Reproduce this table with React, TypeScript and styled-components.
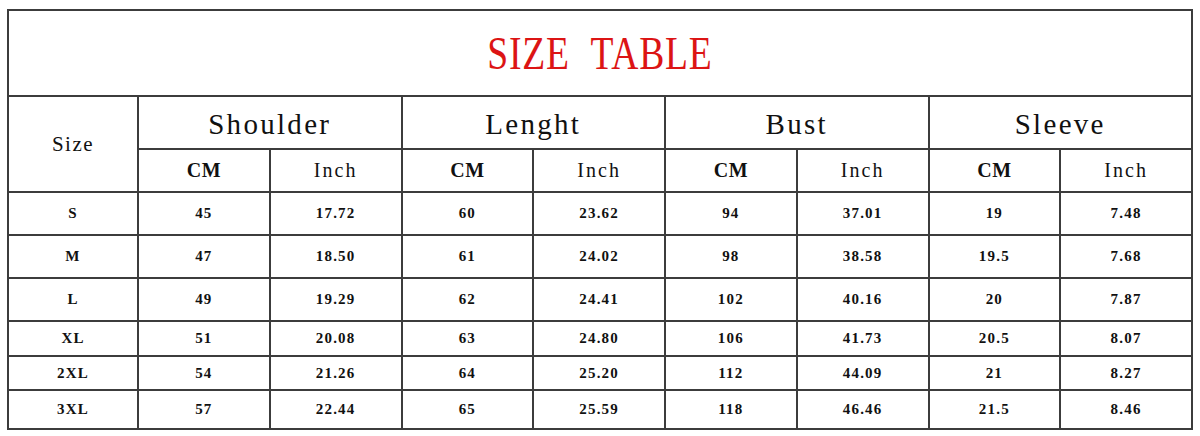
import React from 'react';
import styled, { createGlobalStyle } from 'styled-components';

const GlobalStyle = createGlobalStyle`
  html, body {
    margin: 0;
    padding: 0;
    background: #ffffff;
  }
  body {
    font-family: "Liberation Serif", "Times New Roman", serif;
    color: #111111;
  }
`;

const Page = styled.div`
  width: 1200px;
  height: 436px;
  padding: 9px 0 0 7px;
  box-sizing: border-box;
`;

const Table = styled.table`
  width: 1186px;
  border-collapse: collapse;
  table-layout: fixed;
  font-family: "Liberation Serif", "Times New Roman", serif;
`;

const Row = styled.tr<{ $h: number }>`
  height: ${({ $h }) => $h}px;
`;

const BaseCell = styled.td`
  border: 2px solid #3c3c3c;
  padding: 0;
  text-align: center;
  vertical-align: middle;
  white-space: nowrap;
  overflow: hidden;
`;

const TitleCell = styled(BaseCell)`
  color: #dc1414;
  font-size: 47px;
  line-height: 1;
`;

// the original uses a narrow monospaced serif, so squeeze the glyphs a little
const TitleText = styled.span`
  display: inline-block;
  transform: scaleX(0.8);
  letter-spacing: 1px;
  word-spacing: 14px;
`;

const SizeHead = styled(BaseCell)`
  font-size: 21px;
  letter-spacing: 1.5px;
`;

const GroupHead = styled(BaseCell)`
  font-size: 29px;
  letter-spacing: 2.3px;
  padding-top: 4px;
`;

const UnitHead = styled(BaseCell)<{ $bold?: boolean }>`
  font-size: 20px;
  font-weight: ${({ $bold }) => ($bold ? 700 : 400)};
  letter-spacing: ${({ $bold }) => ($bold ? '0.5px' : '2px')};
`;

const DataCell = styled(BaseCell)`
  font-size: 15px;
  font-weight: 700;
  letter-spacing: 1.2px;
`;

const groups = ['Shoulder', 'Lenght', 'Bust', 'Sleeve'];

const rows: { size: string; h: number; vals: string[] }[] = [
  { size: 'S', h: 43, vals: ['45', '17.72', '60', '23.62', '94', '37.01', '19', '7.48'] },
  { size: 'M', h: 43, vals: ['47', '18.50', '61', '24.02', '98', '38.58', '19.5', '7.68'] },
  { size: 'L', h: 43, vals: ['49', '19.29', '62', '24.41', '102', '40.16', '20', '7.87'] },
  { size: 'XL', h: 35, vals: ['51', '20.08', '63', '24.80', '106', '41.73', '20.5', '8.07'] },
  { size: '2XL', h: 34, vals: ['54', '21.26', '64', '25.20', '112', '44.09', '21', '8.27'] },
  { size: '3XL', h: 39, vals: ['57', '22.44', '65', '25.59', '118', '46.46', '21.5', '8.46'] },
];

export default function App() {
  return (
    <Page>
      <GlobalStyle />
      <Table>
        <colgroup>
          <col style={{ width: 130 }} />
          {Array.from({ length: 8 }).map((_, i) => (
            <col key={i} />
          ))}
        </colgroup>
        <tbody>
          <Row $h={86}>
            <TitleCell colSpan={9}>
              <TitleText>SIZE TABLE</TitleText>
            </TitleCell>
          </Row>
          <Row $h={53}>
            <SizeHead rowSpan={2}>Size</SizeHead>
            {groups.map((g) => (
              <GroupHead key={g} colSpan={2}>
                {g}
              </GroupHead>
            ))}
          </Row>
          <Row $h={43}>
            {groups.map((g) => (
              <React.Fragment key={g}>
                <UnitHead $bold>CM</UnitHead>
                <UnitHead>Inch</UnitHead>
              </React.Fragment>
            ))}
          </Row>
          {rows.map((r) => (
            <Row key={r.size} $h={r.h}>
              <DataCell>{r.size}</DataCell>
              {r.vals.map((v, i) => (
                <DataCell key={i}>{v}</DataCell>
              ))}
            </Row>
          ))}
        </tbody>
      </Table>
    </Page>
  );
}
